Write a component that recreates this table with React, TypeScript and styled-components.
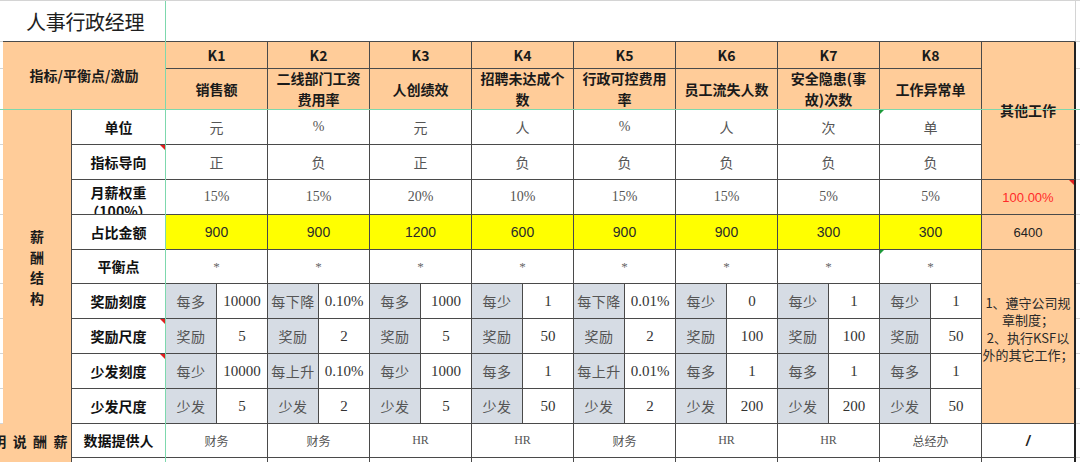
import React from 'react';
import styled, { createGlobalStyle } from 'styled-components';

const GlobalStyle = createGlobalStyle`
  html, body { margin: 0; padding: 0; background: #fff; }
  body {
    width: 1080px;
    height: 462px;
    overflow: hidden;
    font-family: "Noto Sans CJK SC", "Noto Sans", sans-serif;
  }
`;

const ORANGE = '#FFCC99';
const YELLOW = '#FFFF00';
const KEYGRAY = '#D6DCE4';
const LINE = '#4a4a4a';
const LIGHT = '#d4d4d4';
const FREEZE = '#7dd8ad';

const SERIF = '"Liberation Serif", "Noto Sans CJK SC", serif';
const SANS = '"Liberation Sans", "Noto Sans CJK SC", sans-serif';
const CJK = '"Noto Sans CJK SC", "Noto Sans", sans-serif';

const Sheet = styled.div`
  position: relative;
  display: grid;
  grid-template-columns: 3px 69px 94px repeat(16, 51px) 94px 4px;
  grid-template-rows: 41px 27px 41px 35px 35px 35px 35px 34px 35px 35px 35px 35px 34px 30px;
  width: 1080px;
  border-top: 1px solid ${LIGHT};
`;

type CellProps = { $c: string; $r: string };

const Cell = styled.div<CellProps>`
  grid-column: ${(p) => p.$c};
  grid-row: ${(p) => p.$r};
  box-sizing: border-box;
  position: relative;
  display: flex;
  align-items: center;
  justify-content: center;
  text-align: center;
  overflow: hidden;
  border-right: 1px solid ${LINE};
  border-bottom: 1px solid ${LINE};
  background: #fff;
  color: #222;
`;

const Strip = styled(Cell)`
  border-right: none;
  border-bottom: 1px solid ${LIGHT};
`;

const Edge = styled(Cell)`
  border-right: none;
  border-bottom: 1px solid ${LIGHT};
`;

const TitleCell = styled(Cell)`
  justify-content: flex-start;
  padding-left: 23px;
  border-right: none;
  font-family: ${CJK};
  font-size: 20px;
  color: #1e1e1e;
  letter-spacing: -0.3px;
`;

const TitleFill = styled(Cell)`
  border-right: 1px solid ${LIGHT};
`;

const HeadCell = styled(Cell)`
  background: ${ORANGE};
  font-family: ${CJK};
  font-weight: 700;
  font-size: 14px;
  line-height: 21px;
  padding: 0 4px;
  color: #1a1a1a;
`;

const OtherHead = styled(HeadCell)`
  border-right: 2px solid #222;
`;

const SideCell = styled(Cell)<{ $align?: 'end' }>`
  background: ${ORANGE};
  font-family: ${CJK};
  font-weight: 700;
  font-size: 14px;
  color: #1a1a1a;
  border-bottom: none;
  justify-content: ${(p) => (p.$align === 'end' ? 'flex-end' : 'center')};
  align-items: ${(p) => (p.$align === 'end' ? 'flex-start' : 'center')};
  padding-right: ${(p) => (p.$align === 'end' ? '2px' : '0')};
  line-height: 34px;
  overflow: hidden;
`;

const VerticalText = styled.span`
  display: block;
  width: 1em;
  line-height: 20.5px;
  white-space: normal;
  word-break: break-all;
`;

const SpacedText = styled.span`
  white-space: nowrap;
  letter-spacing: 1.6px;
`;

const LabelCell = styled(Cell)<{ $top?: boolean }>`
  font-family: ${CJK};
  font-weight: 700;
  font-size: 14px;
  color: #111;
  align-items: ${(p) => (p.$top ? 'flex-start' : 'center')};
  padding-top: ${(p) => (p.$top ? '3px' : '0')};
  line-height: 19px;
`;

const ValueCell = styled(Cell)`
  font-family: ${SERIF};
  font-size: 14px;
  color: #555;
`;

const AmountCell = styled(Cell)`
  background: ${YELLOW};
  font-family: ${SANS};
  font-size: 14px;
  color: #2a2a2a;
`;

const KeyCell = styled(Cell)`
  background: ${KEYGRAY};
  font-family: ${CJK};
  font-size: 14px;
  color: #555;
  letter-spacing: 0.5px;
  white-space: nowrap;
`;

const NumCell = styled(Cell)`
  font-family: ${SERIF};
  font-size: 15px;
  color: #333;
  white-space: nowrap;
`;

const StarCell = styled(Cell)`
  font-family: ${SERIF};
  font-size: 13px;
  color: #666;
`;

const SourceCell = styled(Cell)`
  font-family: ${SERIF};
  font-size: 12px;
  color: #555;
`;

const OtherCell = styled(Cell)<{ $bg?: string; $color?: string }>`
  background: ${(p) => p.$bg || '#fff'};
  color: ${(p) => p.$color || '#222'};
  font-family: ${SANS};
  font-size: 13px;
  border-right: 2px solid #222;
`;

const NoteCell = styled(OtherCell)`
  font-family: ${CJK};
  line-height: 17.5px;
  padding-bottom: 16px;
`;

const SlashText = styled.span`
  font-family: ${SANS};
  font-weight: 700;
  font-size: 14px;
  font-style: italic;
  color: #222;
`;

const Mark = styled.span<{ $kind: 'red' | 'green' }>`
  position: absolute;
  top: 0;
  width: 0;
  height: 0;
  ${(p) =>
    p.$kind === 'red'
      ? `right: 0; border-top: 5px solid #e02020; border-left: 5px solid transparent;`
      : `left: 0; border-top: 4px solid #1c9a3a; border-right: 4px solid transparent;`}
`;

const FreezeV = styled.div`
  position: absolute;
  left: 165px;
  top: 0;
  bottom: 0;
  width: 1px;
  background: ${FREEZE};
  pointer-events: none;
`;

const FreezeH = styled.div`
  position: absolute;
  top: 108px;
  left: 0;
  right: 0;
  height: 1px;
  background: ${FREEZE};
  pointer-events: none;
`;

type Kpi = {
  k: string;
  name: string;
  unit: string;
  dir: string;
  weight: string;
  amount: string;
  reward: [string, string];
  rewardScale: [string, string];
  less: [string, string];
  lessScale: [string, string];
  source: string;
};

const kpis: Kpi[] = [
  { k: 'K1', name: '销售额', unit: '元', dir: '正', weight: '15%', amount: '900', reward: ['每多', '10000'], rewardScale: ['奖励', '5'], less: ['每少', '10000'], lessScale: ['少发', '5'], source: '财务' },
  { k: 'K2', name: '二线部门工资费用率', unit: '%', dir: '负', weight: '15%', amount: '900', reward: ['每下降', '0.10%'], rewardScale: ['奖励', '2'], less: ['每上升', '0.10%'], lessScale: ['少发', '2'], source: '财务' },
  { k: 'K3', name: '人创绩效', unit: '元', dir: '正', weight: '20%', amount: '1200', reward: ['每多', '1000'], rewardScale: ['奖励', '5'], less: ['每少', '1000'], lessScale: ['少发', '5'], source: 'HR' },
  { k: 'K4', name: '招聘未达成个数', unit: '人', dir: '负', weight: '10%', amount: '600', reward: ['每少', '1'], rewardScale: ['奖励', '50'], less: ['每多', '1'], lessScale: ['少发', '50'], source: 'HR' },
  { k: 'K5', name: '行政可控费用率', unit: '%', dir: '负', weight: '15%', amount: '900', reward: ['每下降', '0.01%'], rewardScale: ['奖励', '2'], less: ['每上升', '0.01%'], lessScale: ['少发', '2'], source: '财务' },
  { k: 'K6', name: '员工流失人数', unit: '人', dir: '负', weight: '15%', amount: '900', reward: ['每少', '0'], rewardScale: ['奖励', '100'], less: ['每多', '1'], lessScale: ['少发', '200'], source: 'HR' },
  { k: 'K7', name: '安全隐患(事故)次数', unit: '次', dir: '负', weight: '5%', amount: '300', reward: ['每少', '1'], rewardScale: ['奖励', '100'], less: ['每多', '1'], lessScale: ['少发', '200'], source: 'HR' },
  { k: 'K8', name: '工作异常单', unit: '单', dir: '负', weight: '5%', amount: '300', reward: ['每少', '1'], rewardScale: ['奖励', '50'], less: ['每多', '1'], lessScale: ['少发', '50'], source: '总经办' },
];

const span = (i: number) => `${4 + i * 2} / ${6 + i * 2}`;
const keyCol = (i: number) => `${4 + i * 2}`;
const numCol = (i: number) => `${5 + i * 2}`;

const labels: { text: React.ReactNode; row: number; top?: boolean; mark?: boolean }[] = [
  { text: '单位', row: 4 },
  { text: '指标导向', row: 5, mark: true },
  { text: <>月薪权重<br />（100%）</>, row: 6, top: true },
  { text: '占比金额', row: 7 },
  { text: '平衡点', row: 8 },
  { text: '奖励刻度', row: 9 },
  { text: '奖励尺度', row: 10, mark: true },
  { text: '少发刻度', row: 11, mark: true },
  { text: '少发尺度', row: 12 },
  { text: '数据提供人', row: 13 },
];

const splitRows: { row: number; field: 'reward' | 'rewardScale' | 'less' | 'lessScale' }[] = [
  { row: 9, field: 'reward' },
  { row: 10, field: 'rewardScale' },
  { row: 11, field: 'less' },
  { row: 12, field: 'lessScale' },
];

export default function App() {
  return (
    <>
      <GlobalStyle />
      <Sheet>
        {Array.from({ length: 12 }).map((_, i) => (
          <Strip key={`s${i}`} $c="1" $r={`${i + 1}`} />
        ))}
        {Array.from({ length: 14 }).map((_, i) => (
          <Edge key={`e${i}`} $c="21" $r={`${i + 1}`} />
        ))}

        <TitleCell $c="2 / 4" $r="1">人事行政经理</TitleCell>
        <TitleFill $c="4 / 21" $r="1" />

        <HeadCell $c="2 / 4" $r="2 / 4">指标/平衡点/激励</HeadCell>
        {kpis.map((k, i) => (
          <HeadCell key={`k${i}`} $c={span(i)} $r="2">{k.k}</HeadCell>
        ))}
        {kpis.map((k, i) => (
          <HeadCell key={`n${i}`} $c={span(i)} $r="3">{k.name}</HeadCell>
        ))}
        <OtherHead $c="20" $r="2 / 6">其他工作</OtherHead>

        <SideCell $c="2" $r="4 / 13">
          <VerticalText>薪酬结构</VerticalText>
        </SideCell>
        <SideCell $c="1 / 3" $r="13 / 15" $align="end">
          <SpacedText>明 说 酬 薪</SpacedText>
        </SideCell>

        {labels.map((l) => (
          <LabelCell key={`l${l.row}`} $c="3" $r={`${l.row}`} $top={l.top}>
            {l.text}
            {l.mark && <Mark $kind="red" />}
          </LabelCell>
        ))}
        <LabelCell $c="3" $r="14" />

        {kpis.map((k, i) => (
          <React.Fragment key={`d${i}`}>
            <ValueCell $c={span(i)} $r="4">
              {k.unit}
              {i === 7 && <Mark $kind="green" />}
            </ValueCell>
            <ValueCell $c={span(i)} $r="5">{k.dir}</ValueCell>
            <ValueCell $c={span(i)} $r="6">{k.weight}</ValueCell>
            <AmountCell $c={span(i)} $r="7">{k.amount}</AmountCell>
            <StarCell $c={span(i)} $r="8">
              *
              {i === 7 && <Mark $kind="green" />}
            </StarCell>
            {splitRows.map((s) => (
              <React.Fragment key={`sp${i}-${s.row}`}>
                <KeyCell $c={keyCol(i)} $r={`${s.row}`}>{k[s.field][0]}</KeyCell>
                <NumCell $c={numCol(i)} $r={`${s.row}`}>{k[s.field][1]}</NumCell>
              </React.Fragment>
            ))}
            <SourceCell $c={span(i)} $r="13">{k.source}</SourceCell>
            <SourceCell $c={span(i)} $r="14" />
          </React.Fragment>
        ))}

        <OtherCell $c="20" $r="6" $bg={ORANGE} $color="#ff2a2a">
          100.00%
          <Mark $kind="red" />
        </OtherCell>
        <OtherCell $c="20" $r="7" $bg={ORANGE}>6400</OtherCell>
        <NoteCell $c="20" $r="8 / 13" $bg={ORANGE} $color="#2a2a2a">
          1、遵守公司规<br />章制度；<br />2、执行KSF以<br />外的其它工作；
        </NoteCell>
        <OtherCell $c="20" $r="13"><SlashText>/</SlashText></OtherCell>
        <OtherCell $c="20" $r="14" />

        <FreezeV />
        <FreezeH />
      </Sheet>
    </>
  );
}
